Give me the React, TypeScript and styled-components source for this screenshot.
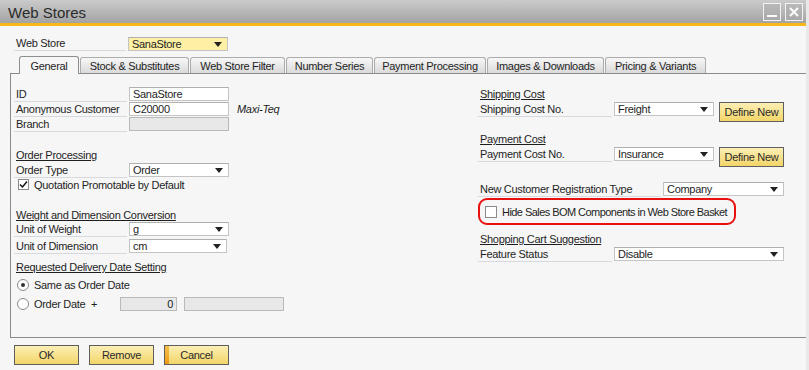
import React from "react";
import styled, { createGlobalStyle, css } from "styled-components";

const Global = createGlobalStyle`
  html, body { margin: 0; padding: 0; background: #f6f6f6; }
  body { font-family: "Liberation Sans", Arial, sans-serif; font-size: 11px; letter-spacing: -0.3px; color: #1e1e1e; }
  * { box-sizing: border-box; }
`;

const Window = styled.div`
  width: 809px;
  height: 370px;
  display: flex;
  flex-direction: column;
  background: #f6f6f6;
  border-right: 3px solid #e9e9e9;
  overflow: hidden;
`;

const TitleBar = styled.div`
  height: 23px;
  display: flex;
  align-items: center;
  justify-content: space-between;
  padding: 0 3px 0 8px;
  background: linear-gradient(#cbcbcb, #a3a3a3);
`;

const Title = styled.div`
  font-size: 15px;
  letter-spacing: 0;
  color: #2b2b2b;
  margin-top: 1px;
`;

const WinButtons = styled.div`
  display: flex;
  gap: 4px;
  margin-top: 1px;
`;

const WinButton = styled.div`
  width: 18px;
  height: 18px;
  border: 1px solid #f2f2f2;
  background: linear-gradient(#b9b9b9, #a9a9a9);
  display: flex;
  align-items: center;
  justify-content: center;
`;

const AccentBar = styled.div`
  height: 3px;
  background: #f6b816;
`;

const Body = styled.div`
  display: flex;
  flex-direction: column;
  padding: 10px 0 0 10px;
`;

const TopRow = styled.div`
  display: flex;
  align-items: flex-end;
  height: 15px;
  padding-left: 4px;
`;

const Label = styled.div<{ $w: number }>`
  width: ${(p) => p.$w}px;
  height: 15px;
  padding-left: 2px;
  line-height: 14px;
  white-space: nowrap;
  flex-shrink: 0;
  border-bottom: 1px solid #d6d9de;
`;

const fieldBase = css<{ $w: number; $ml?: number }>`
  width: ${(p) => p.$w}px;
  height: 14px;
  margin-left: ${(p) => p.$ml ?? 2}px;
  padding: 0 3px;
  line-height: 12px;
  border: 1px solid #c4c4c4;
  border-top-color: #b0b0b0;
  white-space: nowrap;
  overflow: hidden;
  flex-shrink: 0;
`;

const TextBox = styled.div<{ $w: number; $ml?: number; $disabled?: boolean; $right?: boolean }>`
  ${fieldBase};
  background: ${(p) => (p.$disabled ? "#e8e8e8" : "#ffffff")};
  text-align: ${(p) => (p.$right ? "right" : "left")};
  ${(p) =>
    p.$disabled &&
    css`
      border-color: #b9b9b9;
    `}
`;

const ComboBox = styled.div<{ $w: number; $ml?: number; $yellow?: boolean }>`
  ${fieldBase};
  position: relative;
  background: ${(p) => (p.$yellow ? "#fdf0a4" : "#ffffff")};
  &::after {
    content: "";
    position: absolute;
    right: 5px;
    top: 4px;
    border-left: 4px solid transparent;
    border-right: 4px solid transparent;
    border-top: 5px solid #222;
  }
`;

const Tabs = styled.div`
  display: flex;
  align-items: flex-end;
  height: 17px;
  margin-top: 5px;
  padding-left: 9px;
  position: relative;
  z-index: 1;
`;

const Tab = styled.div<{ $w: number; $active?: boolean }>`
  width: ${(p) => p.$w}px;
  display: flex;
  align-items: center;
  justify-content: center;
  white-space: nowrap;
  border: 1px solid #a4a4a4;
  border-bottom: none;
  border-radius: 3px 3px 0 0;
  margin-right: 1px;
  ${(p) =>
    p.$active
      ? css`
          height: 18px;
          margin-bottom: -1px;
          background: #f6f6f6;
          border-color: #8e8e8e;
          padding-top: 1px;
        `
      : css`
          height: 16px;
          background: linear-gradient(#f7f7f7, #dadada);
          border-color: #adadad;
        `}
`;

const Panel = styled.div`
  width: 796px;
  height: 265px;
  border-top: 1px solid #8a8a8a;
  border-left: 1px solid #8a8a8a;
  border-bottom: 1px solid #8a8a8a;
  display: flex;
  padding-left: 3px;
`;

const Column = styled.div<{ $w: number }>`
  width: ${(p) => p.$w}px;
  display: flex;
  flex-direction: column;
`;

const Row = styled.div<{ $mt?: number }>`
  display: flex;
  align-items: flex-start;
  height: 15px;
  margin-top: ${(p) => p.$mt ?? 0}px;
`;

const Header = styled.div<{ $mt?: number }>`
  height: 15px;
  line-height: 14px;
  padding-left: 2px;
  margin-top: ${(p) => p.$mt ?? 0}px;
  text-decoration: underline;
  text-underline-offset: 1px;
`;

const Italic = styled.div`
  font-style: italic;
  margin-left: 8px;
  line-height: 14px;
`;

const OptionRow = styled.div<{ $mt?: number }>`
  display: flex;
  align-items: center;
  height: 15px;
  margin-top: ${(p) => p.$mt ?? 0}px;
  padding-left: 4px;
  gap: 5px;
  white-space: nowrap;
`;

const CheckBox = styled.div<{ $size?: number }>`
  width: ${(p) => p.$size ?? 11}px;
  height: ${(p) => p.$size ?? 11}px;
  border: 1px solid #8b8b8b;
  background: #fff;
  display: flex;
  align-items: center;
  justify-content: center;
  flex-shrink: 0;
`;

const Radio = styled.div<{ $on?: boolean }>`
  width: 12px;
  height: 12px;
  border-radius: 50%;
  border: 1px solid #8b8b8b;
  background: #fff;
  display: flex;
  align-items: center;
  justify-content: center;
  flex-shrink: 0;
  margin-left: -1px;
  &::after {
    content: "";
    width: 4px;
    height: 4px;
    border-radius: 50%;
    background: ${(p) => (p.$on ? "#333" : "transparent")};
  }
`;

const RadioText = styled.span<{ $w?: number }>`
  ${(p) =>
    p.$w &&
    css`
      width: ${p.$w}px;
      flex-shrink: 0;
    `}
`;

const Highlight = styled.div`
  width: 258px;
  height: 27px;
  margin-top: 1px;
  border: 2px solid #e80f0f;
  border-radius: 9px;
  display: flex;
  align-items: center;
  padding-left: 5px;
  gap: 5px;
  white-space: nowrap;
  letter-spacing: -0.55px;
`;

const YellowButton = styled.div<{ $w: number; $focus?: boolean; $ml?: number }>`
  width: ${(p) => p.$w}px;
  height: 20px;
  margin-left: ${(p) => p.$ml ?? 0}px;
  border: 1px solid #5f5f5f;
  background: linear-gradient(#fbefb6, #f3d567);
  display: flex;
  align-items: center;
  justify-content: center;
  color: #2a2a2a;
  flex-shrink: 0;
  position: relative;
  ${(p) =>
    p.$focus &&
    css`
      &::before {
        content: "";
        position: absolute;
        left: 0;
        top: 0;
        bottom: 0;
        width: 4px;
        background: linear-gradient(#f6c04a, #ef9a16);
      }
    `}
`;

const Footer = styled.div`
  display: flex;
  gap: 10px;
  margin-top: 7px;
  padding-left: 4px;
`;

const tabs = [
  { t: "General", w: 60 },
  { t: "Stock & Substitutes", w: 109 },
  { t: "Web Store Filter", w: 95 },
  { t: "Number Series", w: 87 },
  { t: "Payment Processing", w: 112 },
  { t: "Images & Downloads", w: 117 },
  { t: "Pricing & Variants", w: 101 },
];

export default function App() {
  return (
    <>
      <Global />
      <Window>
        <TitleBar>
          <Title>Web Stores</Title>
          <WinButtons>
            <WinButton>
              <svg width="12" height="12" viewBox="0 0 12 12">
                <rect x="1" y="9" width="10" height="2" fill="#fafafa" />
              </svg>
            </WinButton>
            <WinButton>
              <svg width="12" height="12" viewBox="0 0 12 12">
                <path d="M2 2 L10 10 M10 2 L2 10" stroke="#fafafa" strokeWidth="2.2" />
              </svg>
            </WinButton>
          </WinButtons>
        </TitleBar>
        <AccentBar />
        <Body>
          <TopRow>
            <Label $w={112}>Web Store</Label>
            <ComboBox $w={100} $yellow>
              SanaStore
            </ComboBox>
          </TopRow>
          <Tabs>
            {tabs.map((x, i) => (
              <Tab key={x.t} $w={x.w} $active={i === 0}>
                {x.t}
              </Tab>
            ))}
          </Tabs>
          <Panel>
            <Column $w={464}>
              <Row $mt={13}>
                <Label $w={113}>ID</Label>
                <TextBox $w={100}>SanaStore</TextBox>
              </Row>
              <Row>
                <Label $w={113}>Anonymous Customer</Label>
                <TextBox $w={100}>C20000</TextBox>
                <Italic>Maxi-Teq</Italic>
              </Row>
              <Row>
                <Label $w={113}>Branch</Label>
                <TextBox $w={100} $disabled />
              </Row>
              <Header $mt={16}>Order Processing</Header>
              <Row>
                <Label $w={113}>Order Type</Label>
                <ComboBox $w={100}>Order</ComboBox>
              </Row>
              <OptionRow $mt={-1}>
                <CheckBox>
                  <svg width="9" height="9" viewBox="0 0 9 9">
                    <path d="M1 4.5 L3.5 7 L8 1.5" stroke="#111" strokeWidth="1.5" fill="none" />
                  </svg>
                </CheckBox>
                Quotation Promotable by Default
              </OptionRow>
              <Header $mt={16}>Weight and Dimension Conversion</Header>
              <Row $mt={-1}>
                <Label $w={113}>Unit of Weight</Label>
                <ComboBox $w={100}>g</ComboBox>
              </Row>
              <Row $mt={2}>
                <Label $w={113}>Unit of Dimension</Label>
                <ComboBox $w={98}>cm</ComboBox>
              </Row>
              <Header $mt={6}>Requested Delivery Date Setting</Header>
              <OptionRow $mt={2}>
                <Radio $on />
                <RadioText>Same as Order Date</RadioText>
              </OptionRow>
              <OptionRow $mt={4}>
                <Radio />
                <RadioText $w={79}>Order Date&nbsp;&nbsp;+</RadioText>
                <TextBox $w={57} $disabled $right>
                  0
                </TextBox>
                <TextBox $w={100} $ml={2} $disabled />
              </OptionRow>
            </Column>
            <Column $w={310}>
              <Header $mt={13}>Shipping Cost</Header>
              <Row>
                <Label $w={134}>Shipping Cost No.</Label>
                <ComboBox $w={100}>Freight</ComboBox>
                <YellowButton $w={65} $ml={5}>Define New</YellowButton>
              </Row>
              <Header $mt={15}>Payment Cost</Header>
              <Row>
                <Label $w={134}>Payment Cost No.</Label>
                <ComboBox $w={100}>Insurance</ComboBox>
                <YellowButton $w={65} $ml={5}>Define New</YellowButton>
              </Row>
              <Row $mt={20}>
                <Label $w={183}>New Customer Registration Type</Label>
                <ComboBox $w={121}>Company</ComboBox>
              </Row>
              <Highlight>
                <CheckBox $size={12} />
                Hide Sales BOM Components in Web Store Basket
              </Highlight>
              <Header $mt={7}>Shopping Cart Suggestion</Header>
              <Row>
                <Label $w={134}>Feature Status</Label>
                <ComboBox $w={170}>Disable</ComboBox>
              </Row>
            </Column>
          </Panel>
          <Footer>
            <YellowButton $w={65}>OK</YellowButton>
            <YellowButton $w={65}>Remove</YellowButton>
            <YellowButton $w={65} $focus>Cancel</YellowButton>
          </Footer>
        </Body>
      </Window>
    </>
  );
}
